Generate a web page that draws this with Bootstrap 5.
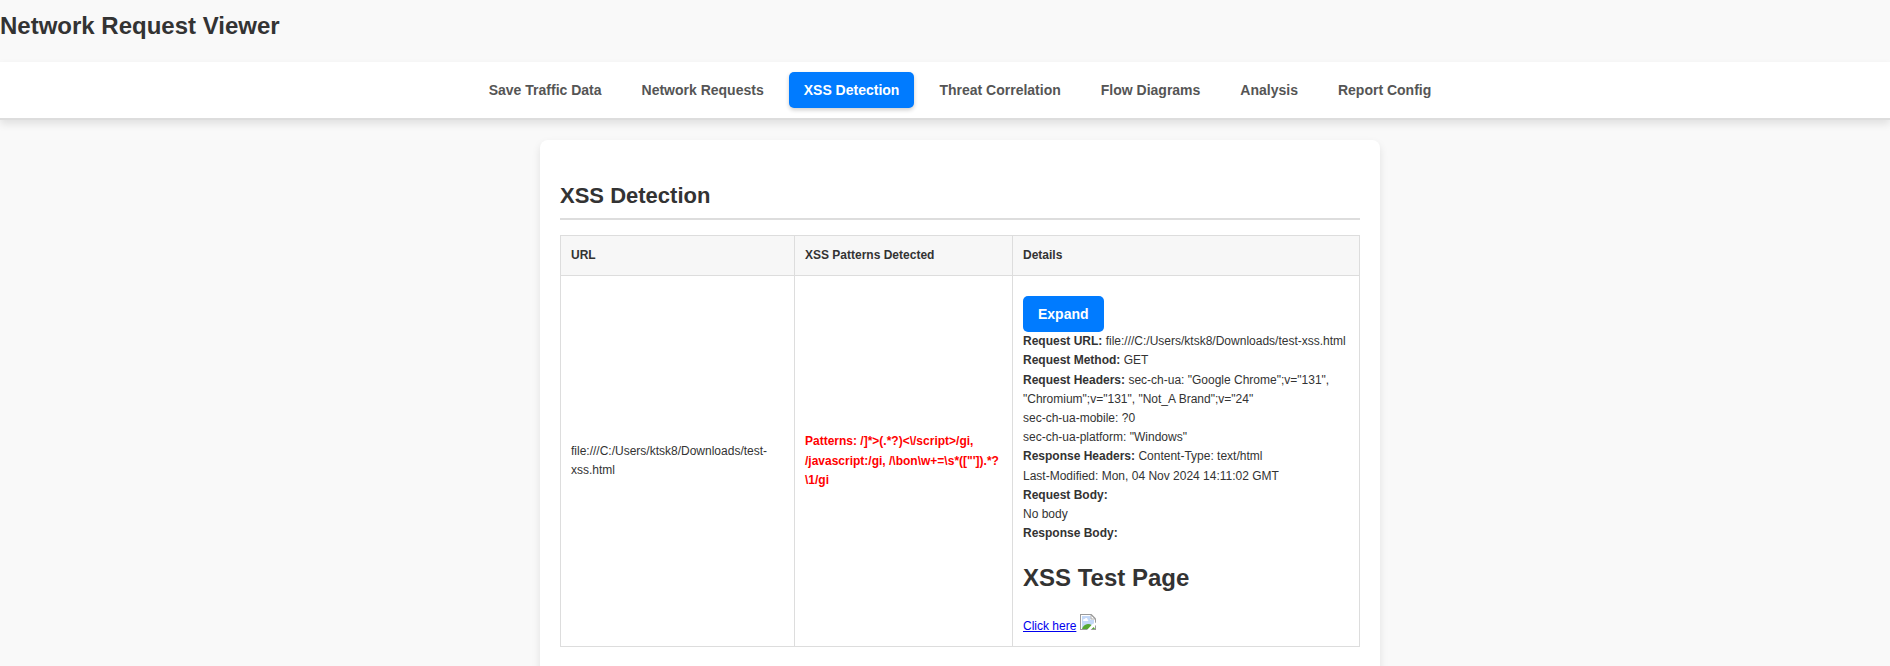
<!DOCTYPE html>
<html lang="en">
<head>
<meta charset="utf-8">
<meta name="viewport" content="width=device-width, initial-scale=1">
<title>Network Request Viewer</title>
<link href="https://cdn.jsdelivr.net/npm/bootstrap@5.3.0/dist/css/bootstrap.min.css" rel="stylesheet">
<style>
body { font-family: "Liberation Sans", Arial, sans-serif; background: #f9f9f9; color: #333; line-height: 1.6; }
h1, h2 { font-weight: 700; line-height: 1.6; }
.page-title { font-size: 24px; padding-top: 7px; height: 62px; }
.top-nav { background: #fff; border-bottom: 2px solid #ddd; box-shadow: 0 4px 8px rgba(0,0,0,.1); height: 58px; gap: 10px; padding-left: 30px; }
.top-nav .nav-link { color: #555; font-size: 14px; font-weight: 700; line-height: 16px; padding: 10px 15px; border-radius: 5px; white-space: nowrap; }
.top-nav .nav-link.active { background: #007bff; color: #fff; box-shadow: 0 2px 4px rgba(0,0,0,.2); }
.panel-wrap { padding: 20px 0 0 30px; height: 546px; overflow: hidden; }
.panel { width: 840px; padding: 35px 20px 20px; background: #fff; border-radius: 8px; box-shadow: 0 4px 8px rgba(0,0,0,.1); min-height: 560px; }
.panel-title { font-size: 22px; height: 45px; padding-top: 3px; border-bottom: 2px solid #ddd; margin-bottom: 15px; }
.xss-table { table-layout: fixed; width: 800px; border-collapse: collapse; font-size: 12px; line-height: 19.2px; }
.xss-table th, .xss-table td { border: 1px solid #ddd; padding: 10px; }
.xss-table th { background: #f7f7f7; }
.patterns { color: red; }
.btn-expand { background: #007bff; color: #fff; font-size: 14px; font-weight: 700; line-height: 16px; padding: 10px 15px; border: 0; border-radius: 5px; margin-top: 10px; display: block; }
.result-title { font-size: 24px; margin: 16px 0; }
.result-link { color: #00e; }
.broken-image { vertical-align: baseline; }
</style>
</head>
<body>
<h1 class="page-title mb-0">Network Request Viewer</h1>
<nav class="top-nav nav justify-content-center align-items-center position-relative">
  <a class="nav-link" href="#">Save Traffic Data</a>
  <a class="nav-link" href="#">Network Requests</a>
  <a class="nav-link active" href="#">XSS Detection</a>
  <a class="nav-link" href="#">Threat Correlation</a>
  <a class="nav-link" href="#">Flow Diagrams</a>
  <a class="nav-link" href="#">Analysis</a>
  <a class="nav-link" href="#">Report Config</a>
</nav>
<div class="panel-wrap">
<main class="panel mx-auto">
  <h2 class="panel-title">XSS Detection</h2>
  <table class="xss-table">
    <colgroup><col style="width:234px"><col style="width:218px"><col></colgroup>
    <thead><tr><th>URL</th><th>XSS Patterns Detected</th><th>Details</th></tr></thead>
    <tbody><tr>
      <td>file:///C:/Users/ktsk8/Downloads/test-<br>xss.html</td>
      <td class="patterns fw-bold">Patterns: /]*&gt;(.*?)&lt;\/script&gt;/gi,<br>/javascript:/gi, /\bon\w+=\s*(["']).*?<br>\1/gi</td>
      <td>
        <button class="btn-expand" type="button">Expand</button>
        <div class="text-nowrap">
          <strong>Request URL:</strong> file:///C:/Users/ktsk8/Downloads/test-xss.html<br>
          <strong>Request Method:</strong> GET<br>
          <strong>Request Headers:</strong> sec-ch-ua: "Google Chrome";v="131",<br>
          "Chromium";v="131", "Not_A Brand";v="24"<br>
          sec-ch-ua-mobile: ?0<br>
          sec-ch-ua-platform: "Windows"<br>
          <strong>Response Headers:</strong> Content-Type: text/html<br>
          Last-Modified: Mon, 04 Nov 2024 14:11:02 GMT<br>
          <strong>Request Body:</strong><br>
          No body<br>
          <strong>Response Body:</strong>
        </div>
        <h1 class="result-title">XSS Test Page</h1>
        <a class="result-link" href="#">Click here</a>
        <svg class="broken-image" width="16" height="16" viewBox="0 0 16 16" aria-hidden="true">
          <path d="M0 0h11.500L16 4.500V16H0z" fill="#9b9b9b"/>
          <path d="M1 1h10l4 4v10H1z" fill="#fff"/>
          <path d="M2 2h8.500v4H14v8.500H2z" fill="#c3d8f8"/>
          <path d="M11 1v4h4z" fill="#fff" stroke="#9b9b9b" stroke-width=".8"/>
          <path d="M3 6.500c0-1.200 1-1.600 1.700-1.400C5.200 3.500 7.500 3.700 7.500 5.400c1.200 0 1.200 1.600 0 1.600H3.500z" fill="#fff"/>
          <path d="M2 15c.8-2.800 3-5 6-5s5.500 2 7 5z" fill="#55a832"/>
          <path d="M16 8.500 12.500 10 7 16h3.500l5.500-5z" fill="#fff"/>
        </svg>
      </td>
    </tr></tbody>
  </table>
</main>
</div>
<script src="https://cdn.jsdelivr.net/npm/bootstrap@5.3.0/dist/js/bootstrap.bundle.min.js"></script>
</body>
</html>
